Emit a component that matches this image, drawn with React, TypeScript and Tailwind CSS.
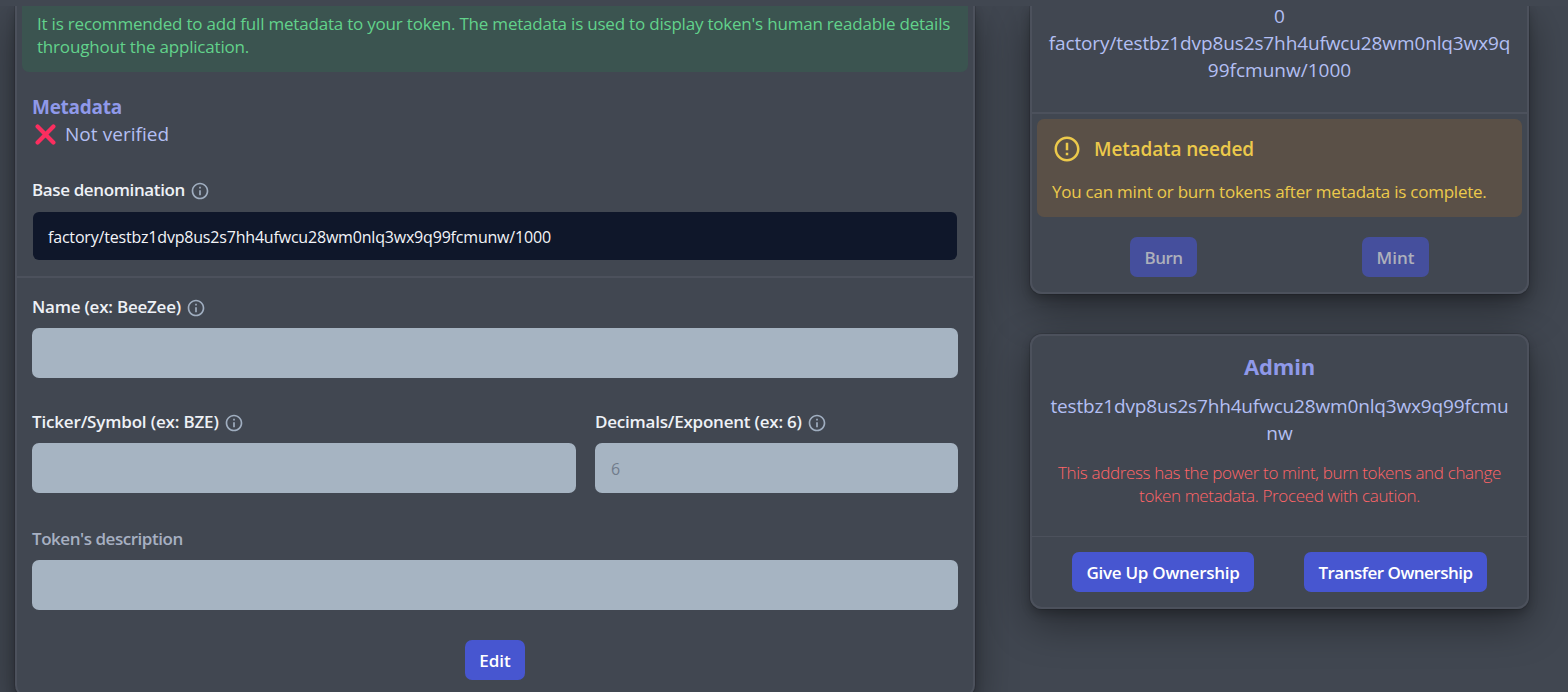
import React from "react";
import { RiErrorWarningLine, RiInformationLine } from "react-icons/ri";

const cardClass =
  "border-2 border-[#4c515c] shadow-[0_0_0_1px_rgba(0,0,0,0.1),0_5px_10px_rgba(0,0,0,0.2),0_15px_40px_rgba(0,0,0,0.4)]";

function CrossMark() {
  return (
    <svg viewBox="0 0 21 21" className="size-[21px] shrink-0" fill="none" stroke="#fb2e5f" strokeWidth="4.2" strokeLinecap="round">
      <path d="M2.6 2.6 18.4 18.4M18.4 2.6 2.6 18.4" />
    </svg>
  );
}

function FieldLabel({ text, className, info = true }: { text: string; className: string; info?: boolean }) {
  return (
    <div className="flex h-6 items-center">
      <span className={`whitespace-nowrap text-[17px] leading-6 font-semibold ${className}`}>{text}</span>
      {info && <RiInformationLine className="relative top-px ml-[5px] size-5 shrink-0 text-[#a0aec0]" />}
    </div>
  );
}

function Field({ placeholder }: { placeholder?: string }) {
  return (
    <input
      disabled
      placeholder={placeholder}
      className="mt-[9px] block h-[50px] w-full rounded-[7px] bg-[#a6b4c2] px-4 pt-0.5 text-base placeholder:text-[#717c8c]"
    />
  );
}

function Button({ text, className, disabled = false }: { text: string; className: string; disabled?: boolean }) {
  return (
    <button
      disabled={disabled}
      className={`h-10 shrink-0 rounded-[7px] bg-[#4756d0] pt-px text-center text-[17px] leading-6 font-semibold whitespace-nowrap text-white disabled:bg-[#454f9d] disabled:text-[#adb0bb] ${className}`}
    >
      {text}
    </button>
  );
}

function MetadataCard() {
  return (
    <section className={`h-[691px] w-[960px] shrink-0 rounded-b-xl border-t-0 bg-[#414751] ${cardClass}`}>
      <div className="mx-[5px] h-[66px] rounded-b-[7px] bg-[#3b5450] pt-1.5 pl-[15px] text-[17px] leading-[23px] whitespace-nowrap text-[#62d28b]">
        <p className="tracking-[-0.205px]">
          It is recommended to add full metadata to your token. The metadata is used to display token's human readable details
        </p>
        <p className="tracking-[-0.19px]">throughout the application.</p>
      </div>

      <div className="px-[15px] pt-[22px]">
        <h2 className="text-[19px] leading-[27px] font-bold tracking-[-0.26px] text-[#8f99e9]">Metadata</h2>
        <div className="flex h-[27px] items-center pl-[3px] text-[19px] leading-[27px] text-[#b3bff3]">
          <CrossMark />
          <span className="ml-[9px] tracking-[0.05px]">Not verified</span>
        </div>
        <div className="mt-[30px]">
          <FieldLabel text="Base denomination" className="tracking-[-0.38px] text-[#eef1f6]" />
        </div>
        <div className="mx-px mt-[10px] h-12 rounded-md bg-[#0f172a] px-[15px] text-base leading-[50px] tracking-[-0.19px] text-[#f3f4f8]">
          factory/testbz1dvp8us2s7hh4ufwcu28wm0nlq3wx9q99fcmunw/1000
        </div>
      </div>

      <hr className="mt-4 border-t-2 border-[#4c515c]" />

      <form className="flex flex-col px-[15px] pt-[17px]">
        <FieldLabel text="Name (ex: BeeZee)" className="tracking-[-0.23px] text-[#eef1f6]" />
        <Field />
        <div className="mt-8 grid grid-cols-[544px_363px] gap-[19px]">
          <div>
            <FieldLabel text="Ticker/Symbol (ex: BZE)" className="tracking-[-0.17px] text-[#eef1f6]" />
            <Field />
          </div>
          <div>
            <FieldLabel text="Decimals/Exponent (ex: 6)" className="tracking-[-0.22px] text-[#eef1f6]" />
            <Field placeholder="6" />
          </div>
        </div>
        <div className="mt-[34px]">
          <FieldLabel text="Token's description" className="tracking-[-0.46px] text-[#a7b0c2]" info={false} />
        </div>
        <Field />
        <div className="mt-[30px] flex justify-center">
          <Button text="Edit" className="w-[60px]" />
        </div>
      </form>
    </section>
  );
}

function SupplyCard() {
  return (
    <section className={`h-72 rounded-b-xl border-t-0 bg-[#414751]/90 ${cardClass}`}>
      <div className="h-[106px] text-center text-[19px] leading-[27px] whitespace-nowrap text-[#b3bff3]">
        <div className="h-6 leading-5">0</div>
        <div className="tracking-[-0.12px]">factory/testbz1dvp8us2s7hh4ufwcu28wm0nlq3wx9q</div>
        <div>99fcmunw/1000</div>
      </div>
      <hr className="border-t-2 border-[#4c515c]" />
      <div className="mx-[5px] mt-[5px] h-[98px] rounded-[7px] bg-[#5a5047] pt-[14px] pl-[15px] text-[#ecc94b]">
        <div className="flex h-8 items-center">
          <RiErrorWarningLine className="size-[30px] shrink-0" />
          <h3 className="ml-3 text-[19px] leading-[27px] font-semibold tracking-[-0.13px]">Metadata needed</h3>
        </div>
        <p className="mt-[15px] text-[17px] leading-6 tracking-[-0.24px] whitespace-nowrap">
          You can mint or burn tokens after metadata is complete.
        </p>
      </div>
      <div className="mt-5 flex justify-between px-[98px]">
        <Button text="Burn" className="w-[67px] tracking-[-0.5px]" disabled />
        <Button text="Mint" className="w-[67px]" disabled />
      </div>
    </section>
  );
}

function AdminCard() {
  return (
    <section className={`h-[275px] rounded-xl bg-[#414751]/90 ${cardClass}`}>
      <div className="h-[200px] pt-[14px] text-center whitespace-nowrap">
        <h2 className="text-[22px] leading-8 font-bold tracking-[-0.2px] text-[#8f99e9]">Admin</h2>
        <div className="mt-[11px] text-[19px] leading-[27px] text-[#b3bff3]">
          <div className="tracking-[-0.16px]">testbz1dvp8us2s7hh4ufwcu28wm0nlq3wx9q99fcmu</div>
          <div>nw</div>
        </div>
        <div className="mt-[14px] text-[17px] leading-[23px] font-light text-[#ff6568]">
          <p className="tracking-[-0.34px]">This address has the power to mint, burn tokens and change</p>
          <p className="tracking-[-0.35px]">token metadata. Proceed with caution.</p>
        </div>
      </div>
      <hr className="border-t border-[#4c515c]" />
      <div className="flex justify-between px-10 pt-[15px]">
        <Button text="Give Up Ownership" className="w-[182px] tracking-[-0.26px]" />
        <Button text="Transfer Ownership" className="w-[183px] tracking-[-0.5px]" />
      </div>
    </section>
  );
}

export default function App() {
  return (
    <div className="h-[692px] w-[1568px] overflow-hidden bg-[#414751] pt-1.5 font-['Open_Sans','Noto_Sans',sans-serif]">
      <main className="flex h-[686px] items-start gap-[55px] overflow-hidden pl-[15px]">
        <MetadataCard />
        <aside className="flex w-[499px] shrink-0 flex-col gap-10">
          <SupplyCard />
          <AdminCard />
        </aside>
      </main>
    </div>
  );
}
